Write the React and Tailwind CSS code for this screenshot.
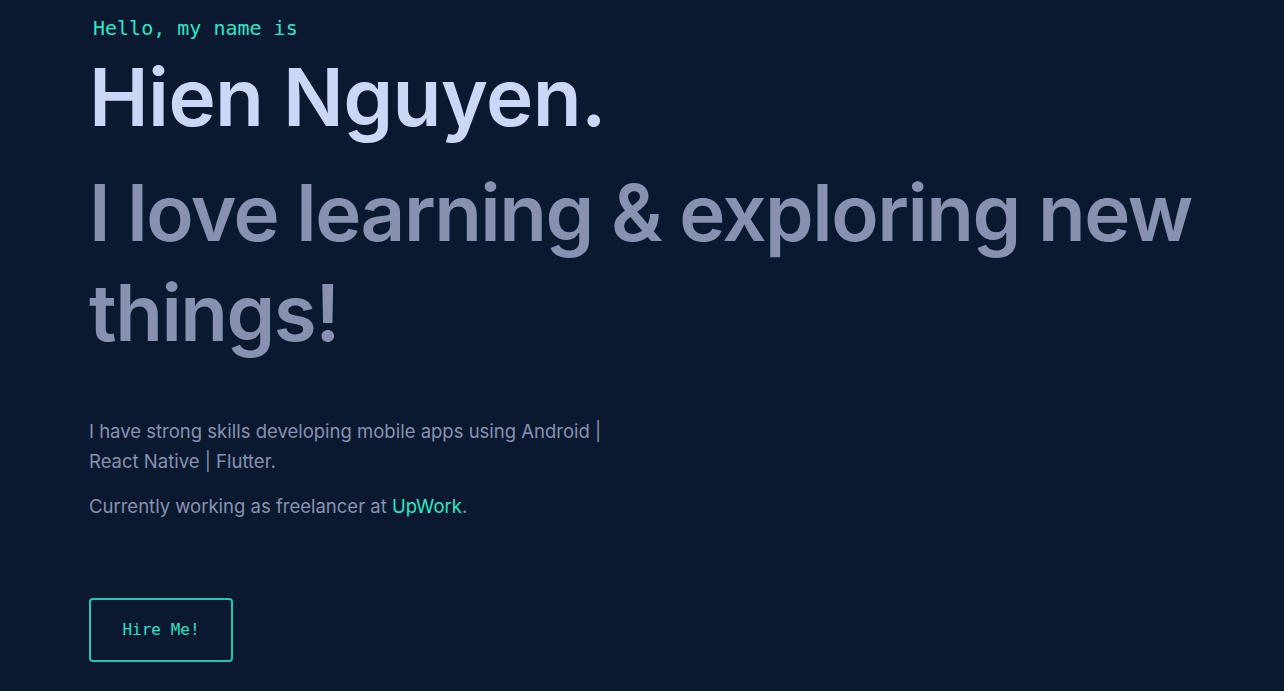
export default function App() {
  return (
    <div className="min-h-[691px] w-full bg-[#0a192f] overflow-hidden">
      <section className="pl-[89px] pt-[14px]">
        <p className="ml-[4px] font-['DejaVu_Sans_Mono',monospace] text-[20px] leading-[28px] text-[#2ee6c8]">
          Hello, my name is
        </p>
        <h1 className="mt-[10px] font-['Inter',sans-serif] font-semibold text-[80px] leading-[90px] text-[#ccd6f6] tracking-[-0.6px]">
          Hien Nguyen.
        </h1>
        <h2 className="mt-[21px] font-['Inter',sans-serif] font-semibold text-[78px] leading-[100px] text-[#8892b0] tracking-[-1.5px] max-w-[1150px]">
          I love learning &amp; exploring new things!
        </h2>
        <div className="mt-[53px] max-w-[530px] font-['Inter',sans-serif] text-[18.5px] leading-[30px] text-[#8892b0]">
          <p>I have strong skills developing mobile apps using Android | React Native | Flutter.</p>
          <p className="mt-[15px]">
            Currently working as freelancer at <span className="text-[#2ee6c8]">UpWork</span>.
          </p>
        </div>
        <button className="mt-[77px] w-[144px] h-[64px] rounded-[4px] border-2 border-[#22c9b2] font-['DejaVu_Sans_Mono',monospace] text-[16px] text-[#2ee0c4]">
          Hire Me!
        </button>
      </section>
    </div>
  );
}
